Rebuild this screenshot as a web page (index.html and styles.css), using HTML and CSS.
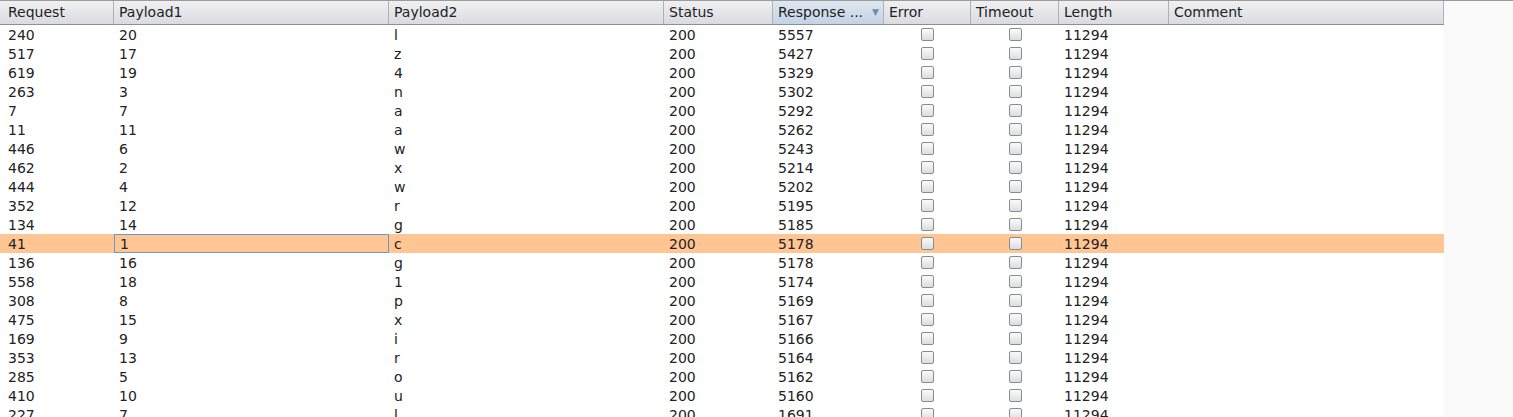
FILE: index.html
```html
<!DOCTYPE html>
<html>
<head>
<meta charset="utf-8">
<link rel="stylesheet" href="styles.css">
</head>
<body>
<div class="page">
  <div class="grid">
    <div class="head">
      <div class="hc">Request</div>
      <div class="hc">Payload1</div>
      <div class="hc">Payload2</div>
      <div class="hc">Status</div>
      <div class="hc sorted"><span>Response ...</span><span class="arrow">▼</span></div>
      <div class="hc">Error</div>
      <div class="hc">Timeout</div>
      <div class="hc">Length</div>
      <div class="hc">Comment</div>
    </div>
    <div class="body" id="body"></div>
  </div>
</div>
<script>
var rows = [
["240","20","l","5557"],["517","17","z","5427"],["619","19","4","5329"],["263","3","n","5302"],
["7","7","a","5292"],["11","11","a","5262"],["446","6","w","5243"],["462","2","x","5214"],
["444","4","w","5202"],["352","12","r","5195"],["134","14","g","5185"],["41","1","c","5178"],
["136","16","g","5178"],["558","18","1","5174"],["308","8","p","5169"],["475","15","x","5167"],
["169","9","i","5166"],["353","13","r","5164"],["285","5","o","5162"],["410","10","u","5160"],
["227","7","l","1691"]];
var b = document.getElementById('body');
rows.forEach(function(r, i){
  var row = document.createElement('div');
  row.className = 'row' + (i === 11 ? ' sel' : '');
  row.innerHTML =
    '<div class="c">'+r[0]+'</div>'+
    '<div class="c'+(i===11?' focus':'')+'">'+r[1]+'</div>'+
    '<div class="c">'+r[2]+'</div>'+
    '<div class="c">200</div>'+
    '<div class="c">'+r[3]+'</div>'+
    '<div class="c cb"><span class="box"></span></div>'+
    '<div class="c cb"><span class="box"></span></div>'+
    '<div class="c">11294</div>'+
    '<div class="c"></div>';
  b.appendChild(row);
});
</script>
</body>
</html>
```
FILE: styles.css
```css
html, body {
  margin: 0;
  padding: 0;
  background: #fafafa;
  overflow: hidden;
}
.page {
  border-top: 1px solid #9c9c9c;
  height: 416px;
  font-family: "DejaVu Sans", sans-serif;
  font-size: 14px;
  color: #222;
}
.grid {
  width: 1444px;
  background: #fff;
  height: 100%;
}
.head, .row {
  display: grid;
  grid-template-columns: 114px 275px 275px 109px 111px 87px 88px 110px 275px;
}
.head {
  height: 23px;
  border-bottom: 1px solid #8e8e93;
}
.hc {
  background: linear-gradient(#f0f0f2, #d9dbe0);
  border-right: 1px solid #aeb0b5;
  padding-left: 5px;
  padding-bottom: 1px;
  box-sizing: border-box;
  display: flex;
  align-items: center;
  color: #222;
  white-space: nowrap;
  overflow: hidden;
}
.hc:first-child { padding-left: 8px; }
.hc.sorted {
  background: linear-gradient(#dfe8f1, #c2d3e4);
  justify-content: space-between;
  padding-right: 4px;
}
.arrow {
  color: #6f8db0;
  font-size: 9px;
}
.row {
  height: 19px;
}
.row.sel { background: #ffc593; }
.c {
  padding-left: 5px;
  display: flex;
  align-items: center;
  white-space: nowrap;
  box-sizing: border-box;
}
.c:first-child { padding-left: 8px; }
.c.focus { border: 1px solid #6a98cc; padding-left: 5px; }
.c.cb { justify-content: center; padding-left: 0; }
.box {
  width: 11px;
  height: 11px;
  border: 1px solid #8a8c90;
  border-radius: 2px;
  background: linear-gradient(#fbfbfc, #dcdde0);
}
```
